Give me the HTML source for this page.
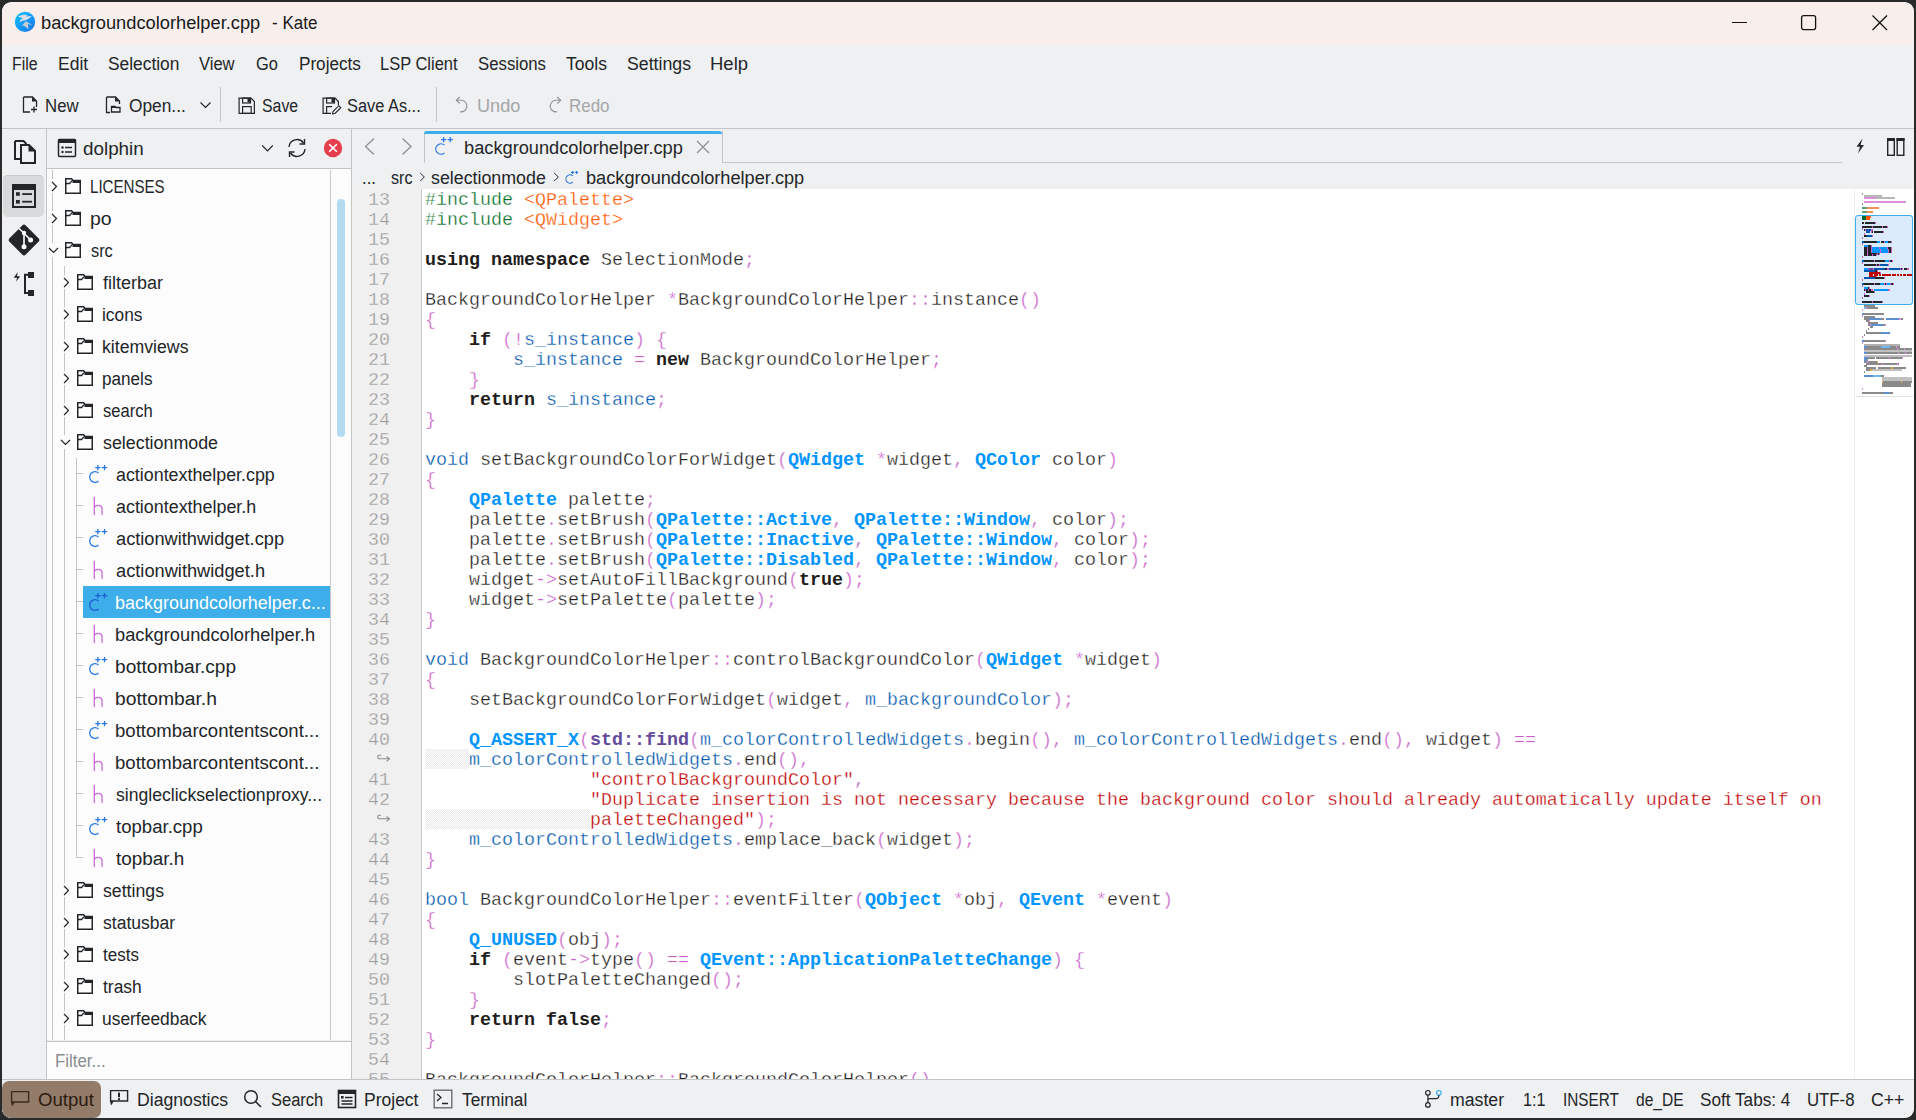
<!DOCTYPE html>
<html><head><meta charset="utf-8"><style>
html,body{margin:0;padding:0}
body{width:1916px;height:1120px;overflow:hidden;background:#2a2a2a;position:relative;font-family:"Liberation Sans", sans-serif}
.t{position:absolute;white-space:pre;line-height:1;transform-origin:0 0;font-family:"Liberation Sans", sans-serif}
.c{position:absolute;left:425px;white-space:pre;font-family:"Liberation Mono", monospace;font-size:18.3333px;line-height:20px;color:#1f1c1b;-webkit-text-stroke:0.3px #fff}
.c b{-webkit-text-stroke:0}
.ln{position:absolute;left:353px;width:37px;text-align:right;white-space:pre;font-family:"Liberation Mono", monospace;font-size:18.3333px;line-height:20px;color:#9a9a9a;-webkit-text-stroke:0.3px #f0f0f0}
svg{overflow:visible}
</style></head><body>
<div style="position:absolute;left:0;top:0;width:1916px;height:1120px;clip-path:inset(2px round 9px)">
<div style="position:absolute;left:2px;top:2px;width:1912px;height:1116px;border-radius:9px;overflow:hidden;background:#eff0f1"></div><div style="position:absolute;left:2px;top:2px;width:1912px;height:43px;border-radius:9px 9px 0 0;background:#f8efec"></div><svg style="position:absolute;left:14px;top:11px" width="22" height="22" viewBox="0 0 22 22"><defs><linearGradient id="kg" x1="0" y1="0" x2="1" y2="1"><stop offset="0" stop-color="#10c8ff"/><stop offset="1" stop-color="#1a70f0"/></linearGradient></defs>
<circle cx="11" cy="10.85" r="10.2" fill="url(#kg)"/>
<path d="M4 5.5 C7 4 10 3.6 13.5 3.9 L11.8 5.6 C14 5.4 16 5 17.6 4.9 C15.5 7.5 13 9 10 9.6 C8 10 6.5 10.5 5.8 11.3 C5.3 9.5 6.8 8.2 9 7.4 C7.5 6.8 6 6.2 4 5.5 Z" fill="#dcdfe3"/>
<path d="M7.8 14.3 C9.5 13.2 10.8 11.5 11.3 10.2 C13.5 11 16.5 12.6 18.3 14.4 C16.8 14.3 15.2 13.5 13.8 12.6 C14 14.5 14.3 16.5 14.4 18.6 C12.8 16.5 10.5 14.8 7.8 14.3 Z" fill="#c9ccd1"/></svg><svg style="position:absolute;left:1730px;top:14px" width="20" height="18" viewBox="0 0 20 18"><path d="M2 8.5 H17" stroke="#111" stroke-width="1.2"/></svg><svg style="position:absolute;left:1799px;top:13px" width="20" height="20" viewBox="0 0 20 20"><rect x="2.6" y="2.6" width="14" height="14" rx="2" fill="none" stroke="#111" stroke-width="1.3"/></svg><svg style="position:absolute;left:1870px;top:13px" width="20" height="20" viewBox="0 0 20 20"><path d="M2.5 2.5 L17 17 M17 2.5 L2.5 17" stroke="#111" stroke-width="1.3"/></svg><svg style="position:absolute;left:22px;top:96px" width="17" height="18" viewBox="0 0 17 18"><path d="M1.5 1 H10.5 L14.5 5 V11 M14.5 11 M8 16 H1.5 V1" fill="none" stroke="#232629" stroke-width="1.3"/><path d="M10 1 L14.5 5.5 H10 Z" fill="#232629"/><path d="M12 10.5 V16.5 M9 13.5 H15" stroke="#232629" stroke-width="1.3"/></svg><svg style="position:absolute;left:105px;top:96px" width="17" height="18" viewBox="0 0 17 18"><path d="M1.5 1 H10.5 L14.5 5 V8 M5 16.5 H1.5 V1" fill="none" stroke="#232629" stroke-width="1.3"/><path d="M10 1 L14.5 5.5 H10 Z" fill="#232629"/><path d="M6.5 10.5 H10 L11 11.5 H15 V16 H6.5 Z" fill="none" stroke="#232629" stroke-width="1.3"/><rect x="6.5" y="10" width="4" height="2" fill="#232629"/></svg><svg style="position:absolute;left:199px;top:101px" width="14" height="9" viewBox="0 0 14 9"><path d="M1.5 1.5 L6.5 6.5 L11.5 1.5" fill="none" stroke="#232629" stroke-width="1.2"/></svg><div style="position:absolute;left:220px;top:87px;width:1px;height:35px;background:#c3c4c5;"></div><svg style="position:absolute;left:237.5px;top:96.5px" width="19" height="18" viewBox="0 0 19 18"><path d="M1.1 1.1 H13 L16.4 4.5 V16.4 H1.1 Z" fill="none" stroke="#232629" stroke-width="1.2"/><rect x="4.6" y="1.1" width="7.9" height="4.9" fill="none" stroke="#232629" stroke-width="1.2"/><rect x="9.5" y="1.5" width="2.6" height="4" fill="#232629"/><rect x="4.6" y="9.6" width="8.6" height="6.8" fill="none" stroke="#232629" stroke-width="1.2"/></svg><svg style="position:absolute;left:321.5px;top:96.5px" width="20" height="18" viewBox="0 0 20 18"><path d="M9 16.4 H1.1 V1.1 H13 L16.4 4.5 V8" fill="none" stroke="#232629" stroke-width="1.2"/><rect x="4.6" y="1.1" width="7.9" height="4.9" fill="none" stroke="#232629" stroke-width="1.2"/><rect x="9.5" y="1.5" width="2.6" height="4" fill="#232629"/><path d="M4.6 16.4 V9.6 H10" fill="none" stroke="#232629" stroke-width="1.2"/><path d="M10.5 16.8 L11 14.5 L16.8 8.7 L18.8 10.7 L13 16.5 Z" fill="none" stroke="#232629" stroke-width="1.1"/></svg><div style="position:absolute;left:436px;top:87px;width:1px;height:35px;background:#c3c4c5;"></div><svg style="position:absolute;left:454px;top:96px" width="16" height="18" viewBox="0 0 16 18"><path d="M2.5 4.3 H8 A5.8 5.8 0 0 1 6 15.8" fill="none" stroke="#8e9093" stroke-width="1.1"/><path d="M5.8 1 L2.3 4.3 L5.8 7.6" fill="none" stroke="#8e9093" stroke-width="1.1"/></svg><svg style="position:absolute;left:546.5px;top:96px" width="16" height="18" viewBox="0 0 16 18"><path d="M13.5 4.3 H8 A5.8 5.8 0 0 0 10 15.8" fill="none" stroke="#8e9093" stroke-width="1.1"/><path d="M10.2 1 L13.7 4.3 L10.2 7.6" fill="none" stroke="#8e9093" stroke-width="1.1"/></svg><div style="position:absolute;left:2px;top:128px;width:1912px;height:1px;background:#c3c4c5;"></div><div style="position:absolute;left:46px;top:129px;width:1px;height:950px;background:#c3c4c5;"></div><div style="position:absolute;left:3px;top:175px;width:41px;height:42px;border-radius:5px;background:#d9dadc;box-shadow:inset 0 1px 0 #c9cacc"></div><svg style="position:absolute;left:12px;top:138px" width="26" height="28" viewBox="0 0 26 28"><path d="M3 3 H11.5 L14.5 6 M8 21 H3 V3" fill="none" stroke="#232629" stroke-width="2"/><path d="M9 7 H17 L23 13 V25 H9 Z" fill="#eff0f1" stroke="#232629" stroke-width="2"/><path d="M16.5 6 L24 13.5 H16.5 Z" fill="#232629"/></svg><svg style="position:absolute;left:12px;top:184px" width="24" height="24" viewBox="0 0 24 24"><rect x="1" y="1" width="22" height="22" fill="none" stroke="#232629" stroke-width="2"/><rect x="0" y="0" width="24" height="6" fill="#232629"/><rect x="4" y="8.2" width="3.8" height="3.6" fill="#232629"/><rect x="4" y="16" width="3.8" height="3.6" fill="#232629"/><rect x="10.2" y="9.2" width="9.8" height="1.8" fill="#232629"/><rect x="10.2" y="16.8" width="9.8" height="1.8" fill="#232629"/></svg><svg style="position:absolute;left:7px;top:223px" width="34" height="34" viewBox="0 0 34 34"><rect x="5.5" y="5.5" width="23" height="23" rx="2.5" transform="rotate(45 17 17)" fill="#232629"/><path d="M12 5.5 L17 10 V24 M17 10.2 L23.6 17" fill="none" stroke="#fff" stroke-width="1.6"/><circle cx="17" cy="10" r="2.2" fill="#fff"/><circle cx="17" cy="23.8" r="2.5" fill="#fff"/><circle cx="23.6" cy="17" r="2.5" fill="#fff"/></svg><svg style="position:absolute;left:13px;top:271px" width="24" height="26" viewBox="0 0 24 26"><path d="M4.7 0.9 L0.8 6.8 H4.1 L3.1 10.8 L7.1 5.2 H4 Z" fill="#232629"/><path d="M15 3.8 H12 V22 H15" fill="none" stroke="#232629" stroke-width="2"/><rect x="15" y="1" width="6" height="6" fill="#232629"/><rect x="15" y="19" width="6" height="6" fill="#232629"/></svg><div style="position:absolute;left:47px;top:168px;width:304px;height:1px;background:#c3c4c5;"></div><div style="position:absolute;left:47px;top:169px;width:304px;height:871px;background:#fcfcfc;"></div><div style="position:absolute;left:330px;top:170px;width:1px;height:870px;background:#c9cacb;"></div><div style="position:absolute;left:337px;top:199px;width:8px;height:238px;border-radius:4px;background:#b3daf0"></div><div style="position:absolute;left:351px;top:129px;width:1px;height:950px;background:#c3c4c5;"></div><svg style="position:absolute;left:57px;top:138px" width="20" height="20" viewBox="0 0 20 20"><rect x="1.5" y="1.5" width="17" height="17" rx="1" fill="none" stroke="#232629" stroke-width="1.5"/><rect x="1" y="1" width="18" height="4" fill="#232629"/><circle cx="5.5" cy="9.5" r="1.2" fill="#232629"/><circle cx="5.5" cy="14" r="1.2" fill="#232629"/><path d="M8 9.5 H15 M8 14 H15" stroke="#232629" stroke-width="1.3"/></svg><svg style="position:absolute;left:261px;top:144px" width="13" height="9" viewBox="0 0 13 9"><path d="M1.2 1.5 L6.5 6.8 L11.8 1.5" fill="none" stroke="#232629" stroke-width="1.2"/></svg><svg style="position:absolute;left:286px;top:138px" width="22" height="20" viewBox="0 0 22 20"><path d="M3 9 A8 8 0 0 1 17.5 5" fill="none" stroke="#232629" stroke-width="1.4"/><path d="M18.5 1 V6 H13.5" fill="none" stroke="#232629" stroke-width="1.4"/><path d="M19 11 A8 8 0 0 1 4.5 15" fill="none" stroke="#232629" stroke-width="1.4"/><path d="M3.5 19 V14 H8.5" fill="none" stroke="#232629" stroke-width="1.4"/></svg><svg style="position:absolute;left:323px;top:138px" width="20" height="20" viewBox="0 0 20 20"><circle cx="10" cy="10" r="9.2" fill="#e43f4e"/><path d="M6.2 6.2 L13.8 13.8 M13.8 6.2 L6.2 13.8" stroke="#fff" stroke-width="1.6"/></svg><div style="position:absolute;left:52px;top:170px;width:1px;height:9px;background:#c4c4c4;"></div><div style="position:absolute;left:52px;top:193px;width:1px;height:9px;background:#c4c4c4;"></div><div style="position:absolute;left:52px;top:202px;width:1px;height:9px;background:#c4c4c4;"></div><div style="position:absolute;left:52px;top:225px;width:1px;height:9px;background:#c4c4c4;"></div><div style="position:absolute;left:52px;top:234px;width:1px;height:9px;background:#c4c4c4;"></div><div style="position:absolute;left:52px;top:257px;width:1px;height:9px;background:#c4c4c4;"></div><div style="position:absolute;left:52px;top:266px;width:1px;height:32px;background:#c4c4c4;"></div><div style="position:absolute;left:64px;top:266px;width:1px;height:9px;background:#c4c4c4;"></div><div style="position:absolute;left:64px;top:289px;width:1px;height:9px;background:#c4c4c4;"></div><div style="position:absolute;left:52px;top:298px;width:1px;height:32px;background:#c4c4c4;"></div><div style="position:absolute;left:64px;top:298px;width:1px;height:9px;background:#c4c4c4;"></div><div style="position:absolute;left:64px;top:321px;width:1px;height:9px;background:#c4c4c4;"></div><div style="position:absolute;left:52px;top:330px;width:1px;height:32px;background:#c4c4c4;"></div><div style="position:absolute;left:64px;top:330px;width:1px;height:9px;background:#c4c4c4;"></div><div style="position:absolute;left:64px;top:353px;width:1px;height:9px;background:#c4c4c4;"></div><div style="position:absolute;left:52px;top:362px;width:1px;height:32px;background:#c4c4c4;"></div><div style="position:absolute;left:64px;top:362px;width:1px;height:9px;background:#c4c4c4;"></div><div style="position:absolute;left:64px;top:385px;width:1px;height:9px;background:#c4c4c4;"></div><div style="position:absolute;left:52px;top:394px;width:1px;height:32px;background:#c4c4c4;"></div><div style="position:absolute;left:64px;top:394px;width:1px;height:9px;background:#c4c4c4;"></div><div style="position:absolute;left:64px;top:417px;width:1px;height:9px;background:#c4c4c4;"></div><div style="position:absolute;left:52px;top:426px;width:1px;height:32px;background:#c4c4c4;"></div><div style="position:absolute;left:64px;top:426px;width:1px;height:9px;background:#c4c4c4;"></div><div style="position:absolute;left:64px;top:449px;width:1px;height:9px;background:#c4c4c4;"></div><div style="position:absolute;left:52px;top:458px;width:1px;height:32px;background:#c4c4c4;"></div><div style="position:absolute;left:64px;top:458px;width:1px;height:32px;background:#c4c4c4;"></div><div style="position:absolute;left:76px;top:458px;width:1px;height:32px;background:#c4c4c4;"></div><div style="position:absolute;left:77px;top:473px;width:6px;height:1px;background:#c4c4c4;"></div><div style="position:absolute;left:52px;top:490px;width:1px;height:32px;background:#c4c4c4;"></div><div style="position:absolute;left:64px;top:490px;width:1px;height:32px;background:#c4c4c4;"></div><div style="position:absolute;left:76px;top:490px;width:1px;height:32px;background:#c4c4c4;"></div><div style="position:absolute;left:77px;top:505px;width:6px;height:1px;background:#c4c4c4;"></div><div style="position:absolute;left:52px;top:522px;width:1px;height:32px;background:#c4c4c4;"></div><div style="position:absolute;left:64px;top:522px;width:1px;height:32px;background:#c4c4c4;"></div><div style="position:absolute;left:76px;top:522px;width:1px;height:32px;background:#c4c4c4;"></div><div style="position:absolute;left:77px;top:537px;width:6px;height:1px;background:#c4c4c4;"></div><div style="position:absolute;left:52px;top:554px;width:1px;height:32px;background:#c4c4c4;"></div><div style="position:absolute;left:64px;top:554px;width:1px;height:32px;background:#c4c4c4;"></div><div style="position:absolute;left:76px;top:554px;width:1px;height:32px;background:#c4c4c4;"></div><div style="position:absolute;left:77px;top:569px;width:6px;height:1px;background:#c4c4c4;"></div><div style="position:absolute;left:52px;top:586px;width:1px;height:32px;background:#c4c4c4;"></div><div style="position:absolute;left:64px;top:586px;width:1px;height:32px;background:#c4c4c4;"></div><div style="position:absolute;left:76px;top:586px;width:1px;height:32px;background:#c4c4c4;"></div><div style="position:absolute;left:77px;top:601px;width:6px;height:1px;background:#c4c4c4;"></div><div style="position:absolute;left:52px;top:618px;width:1px;height:32px;background:#c4c4c4;"></div><div style="position:absolute;left:64px;top:618px;width:1px;height:32px;background:#c4c4c4;"></div><div style="position:absolute;left:76px;top:618px;width:1px;height:32px;background:#c4c4c4;"></div><div style="position:absolute;left:77px;top:633px;width:6px;height:1px;background:#c4c4c4;"></div><div style="position:absolute;left:52px;top:650px;width:1px;height:32px;background:#c4c4c4;"></div><div style="position:absolute;left:64px;top:650px;width:1px;height:32px;background:#c4c4c4;"></div><div style="position:absolute;left:76px;top:650px;width:1px;height:32px;background:#c4c4c4;"></div><div style="position:absolute;left:77px;top:665px;width:6px;height:1px;background:#c4c4c4;"></div><div style="position:absolute;left:52px;top:682px;width:1px;height:32px;background:#c4c4c4;"></div><div style="position:absolute;left:64px;top:682px;width:1px;height:32px;background:#c4c4c4;"></div><div style="position:absolute;left:76px;top:682px;width:1px;height:32px;background:#c4c4c4;"></div><div style="position:absolute;left:77px;top:697px;width:6px;height:1px;background:#c4c4c4;"></div><div style="position:absolute;left:52px;top:714px;width:1px;height:32px;background:#c4c4c4;"></div><div style="position:absolute;left:64px;top:714px;width:1px;height:32px;background:#c4c4c4;"></div><div style="position:absolute;left:76px;top:714px;width:1px;height:32px;background:#c4c4c4;"></div><div style="position:absolute;left:77px;top:729px;width:6px;height:1px;background:#c4c4c4;"></div><div style="position:absolute;left:52px;top:746px;width:1px;height:32px;background:#c4c4c4;"></div><div style="position:absolute;left:64px;top:746px;width:1px;height:32px;background:#c4c4c4;"></div><div style="position:absolute;left:76px;top:746px;width:1px;height:32px;background:#c4c4c4;"></div><div style="position:absolute;left:77px;top:761px;width:6px;height:1px;background:#c4c4c4;"></div><div style="position:absolute;left:52px;top:778px;width:1px;height:32px;background:#c4c4c4;"></div><div style="position:absolute;left:64px;top:778px;width:1px;height:32px;background:#c4c4c4;"></div><div style="position:absolute;left:76px;top:778px;width:1px;height:32px;background:#c4c4c4;"></div><div style="position:absolute;left:77px;top:793px;width:6px;height:1px;background:#c4c4c4;"></div><div style="position:absolute;left:52px;top:810px;width:1px;height:32px;background:#c4c4c4;"></div><div style="position:absolute;left:64px;top:810px;width:1px;height:32px;background:#c4c4c4;"></div><div style="position:absolute;left:76px;top:810px;width:1px;height:32px;background:#c4c4c4;"></div><div style="position:absolute;left:77px;top:825px;width:6px;height:1px;background:#c4c4c4;"></div><div style="position:absolute;left:52px;top:842px;width:1px;height:32px;background:#c4c4c4;"></div><div style="position:absolute;left:64px;top:842px;width:1px;height:32px;background:#c4c4c4;"></div><div style="position:absolute;left:76px;top:842px;width:1px;height:16px;background:#c4c4c4;"></div><div style="position:absolute;left:77px;top:857px;width:6px;height:1px;background:#c4c4c4;"></div><div style="position:absolute;left:52px;top:874px;width:1px;height:32px;background:#c4c4c4;"></div><div style="position:absolute;left:64px;top:874px;width:1px;height:9px;background:#c4c4c4;"></div><div style="position:absolute;left:64px;top:897px;width:1px;height:9px;background:#c4c4c4;"></div><div style="position:absolute;left:52px;top:906px;width:1px;height:32px;background:#c4c4c4;"></div><div style="position:absolute;left:64px;top:906px;width:1px;height:9px;background:#c4c4c4;"></div><div style="position:absolute;left:64px;top:929px;width:1px;height:9px;background:#c4c4c4;"></div><div style="position:absolute;left:52px;top:938px;width:1px;height:32px;background:#c4c4c4;"></div><div style="position:absolute;left:64px;top:938px;width:1px;height:9px;background:#c4c4c4;"></div><div style="position:absolute;left:64px;top:961px;width:1px;height:9px;background:#c4c4c4;"></div><div style="position:absolute;left:52px;top:970px;width:1px;height:32px;background:#c4c4c4;"></div><div style="position:absolute;left:64px;top:970px;width:1px;height:9px;background:#c4c4c4;"></div><div style="position:absolute;left:64px;top:993px;width:1px;height:9px;background:#c4c4c4;"></div><div style="position:absolute;left:52px;top:1002px;width:1px;height:32px;background:#c4c4c4;"></div><div style="position:absolute;left:64px;top:1002px;width:1px;height:9px;background:#c4c4c4;"></div><div style="position:absolute;left:64px;top:1025px;width:1px;height:9px;background:#c4c4c4;"></div><div style="position:absolute;left:52px;top:1034px;width:1px;height:6px;background:#c4c4c4;"></div><div style="position:absolute;left:64px;top:1034px;width:1px;height:6px;background:#c4c4c4;"></div><svg style="position:absolute;left:51px;top:181px" width="7" height="11" viewBox="0 0 7 11"><path d="M1 1 L5.5 5.5 L1 10" fill="none" stroke="#232629" stroke-width="1.2"/></svg><svg style="position:absolute;left:65px;top:178px" width="16" height="16" viewBox="0 0 16 16"><path d="M0.75 0.75 H6.5 L8.2 2.6 H15.25 V15.25 H0.75 Z" fill="none" stroke="#232629" stroke-width="1.5"/><rect x="7.5" y="2" width="8.5" height="3" fill="#232629"/><path d="M0.75 5.5 H4.5 L7.2 2.6" fill="none" stroke="#232629" stroke-width="1.3"/></svg><svg style="position:absolute;left:51px;top:213px" width="7" height="11" viewBox="0 0 7 11"><path d="M1 1 L5.5 5.5 L1 10" fill="none" stroke="#232629" stroke-width="1.2"/></svg><svg style="position:absolute;left:65px;top:210px" width="16" height="16" viewBox="0 0 16 16"><path d="M0.75 0.75 H6.5 L8.2 2.6 H15.25 V15.25 H0.75 Z" fill="none" stroke="#232629" stroke-width="1.5"/><rect x="7.5" y="2" width="8.5" height="3" fill="#232629"/><path d="M0.75 5.5 H4.5 L7.2 2.6" fill="none" stroke="#232629" stroke-width="1.3"/></svg><svg style="position:absolute;left:48px;top:247px" width="11" height="7" viewBox="0 0 11 7"><path d="M1 1 L5.5 5.5 L10 1" fill="none" stroke="#232629" stroke-width="1.2"/></svg><svg style="position:absolute;left:65px;top:242px" width="16" height="16" viewBox="0 0 16 16"><path d="M0.75 0.75 H6.5 L8.2 2.6 H15.25 V15.25 H0.75 Z" fill="none" stroke="#232629" stroke-width="1.5"/><rect x="7.5" y="2" width="8.5" height="3" fill="#232629"/><path d="M0.75 5.5 H4.5 L7.2 2.6" fill="none" stroke="#232629" stroke-width="1.3"/></svg><svg style="position:absolute;left:63px;top:277px" width="7" height="11" viewBox="0 0 7 11"><path d="M1 1 L5.5 5.5 L1 10" fill="none" stroke="#232629" stroke-width="1.2"/></svg><svg style="position:absolute;left:77px;top:274px" width="16" height="16" viewBox="0 0 16 16"><path d="M0.75 0.75 H6.5 L8.2 2.6 H15.25 V15.25 H0.75 Z" fill="none" stroke="#232629" stroke-width="1.5"/><rect x="7.5" y="2" width="8.5" height="3" fill="#232629"/><path d="M0.75 5.5 H4.5 L7.2 2.6" fill="none" stroke="#232629" stroke-width="1.3"/></svg><svg style="position:absolute;left:63px;top:309px" width="7" height="11" viewBox="0 0 7 11"><path d="M1 1 L5.5 5.5 L1 10" fill="none" stroke="#232629" stroke-width="1.2"/></svg><svg style="position:absolute;left:77px;top:306px" width="16" height="16" viewBox="0 0 16 16"><path d="M0.75 0.75 H6.5 L8.2 2.6 H15.25 V15.25 H0.75 Z" fill="none" stroke="#232629" stroke-width="1.5"/><rect x="7.5" y="2" width="8.5" height="3" fill="#232629"/><path d="M0.75 5.5 H4.5 L7.2 2.6" fill="none" stroke="#232629" stroke-width="1.3"/></svg><svg style="position:absolute;left:63px;top:341px" width="7" height="11" viewBox="0 0 7 11"><path d="M1 1 L5.5 5.5 L1 10" fill="none" stroke="#232629" stroke-width="1.2"/></svg><svg style="position:absolute;left:77px;top:338px" width="16" height="16" viewBox="0 0 16 16"><path d="M0.75 0.75 H6.5 L8.2 2.6 H15.25 V15.25 H0.75 Z" fill="none" stroke="#232629" stroke-width="1.5"/><rect x="7.5" y="2" width="8.5" height="3" fill="#232629"/><path d="M0.75 5.5 H4.5 L7.2 2.6" fill="none" stroke="#232629" stroke-width="1.3"/></svg><svg style="position:absolute;left:63px;top:373px" width="7" height="11" viewBox="0 0 7 11"><path d="M1 1 L5.5 5.5 L1 10" fill="none" stroke="#232629" stroke-width="1.2"/></svg><svg style="position:absolute;left:77px;top:370px" width="16" height="16" viewBox="0 0 16 16"><path d="M0.75 0.75 H6.5 L8.2 2.6 H15.25 V15.25 H0.75 Z" fill="none" stroke="#232629" stroke-width="1.5"/><rect x="7.5" y="2" width="8.5" height="3" fill="#232629"/><path d="M0.75 5.5 H4.5 L7.2 2.6" fill="none" stroke="#232629" stroke-width="1.3"/></svg><svg style="position:absolute;left:63px;top:405px" width="7" height="11" viewBox="0 0 7 11"><path d="M1 1 L5.5 5.5 L1 10" fill="none" stroke="#232629" stroke-width="1.2"/></svg><svg style="position:absolute;left:77px;top:402px" width="16" height="16" viewBox="0 0 16 16"><path d="M0.75 0.75 H6.5 L8.2 2.6 H15.25 V15.25 H0.75 Z" fill="none" stroke="#232629" stroke-width="1.5"/><rect x="7.5" y="2" width="8.5" height="3" fill="#232629"/><path d="M0.75 5.5 H4.5 L7.2 2.6" fill="none" stroke="#232629" stroke-width="1.3"/></svg><svg style="position:absolute;left:60px;top:439px" width="11" height="7" viewBox="0 0 11 7"><path d="M1 1 L5.5 5.5 L10 1" fill="none" stroke="#232629" stroke-width="1.2"/></svg><svg style="position:absolute;left:77px;top:434px" width="16" height="16" viewBox="0 0 16 16"><path d="M0.75 0.75 H6.5 L8.2 2.6 H15.25 V15.25 H0.75 Z" fill="none" stroke="#232629" stroke-width="1.5"/><rect x="7.5" y="2" width="8.5" height="3" fill="#232629"/><path d="M0.75 5.5 H4.5 L7.2 2.6" fill="none" stroke="#232629" stroke-width="1.3"/></svg><svg style="position:absolute;left:86.5px;top:463.2px" width="24" height="22" viewBox="0 0 24 22"><path d="M11.55 10.06 A5.3 5.3 0 1 0 11.55 17.94" fill="none" stroke="#2a78e6" stroke-width="1.3"/><path d="M8.20 4.6 H13.60 M10.9 1.90 V7.30 M14.80 4.6 H20.20 M17.5 1.90 V7.30" stroke="#2a78e6" stroke-width="1.3"/></svg><svg style="position:absolute;left:93px;top:497px" width="11" height="18" viewBox="0 0 11 18"><path d="M1.3 0 V18 M1.3 11 C1.8 7.6 9 7.2 9 11.5 V18" fill="none" stroke="#cc6fdc" stroke-width="1.3"/></svg><svg style="position:absolute;left:86.5px;top:527.2px" width="24" height="22" viewBox="0 0 24 22"><path d="M11.55 10.06 A5.3 5.3 0 1 0 11.55 17.94" fill="none" stroke="#2a78e6" stroke-width="1.3"/><path d="M8.20 4.6 H13.60 M10.9 1.90 V7.30 M14.80 4.6 H20.20 M17.5 1.90 V7.30" stroke="#2a78e6" stroke-width="1.3"/></svg><svg style="position:absolute;left:93px;top:561px" width="11" height="18" viewBox="0 0 11 18"><path d="M1.3 0 V18 M1.3 11 C1.8 7.6 9 7.2 9 11.5 V18" fill="none" stroke="#cc6fdc" stroke-width="1.3"/></svg><div style="position:absolute;left:83px;top:586px;width:247px;height:32px;background:#3daee9;"></div><svg style="position:absolute;left:86.5px;top:591.2px" width="24" height="22" viewBox="0 0 24 22"><path d="M11.55 10.06 A5.3 5.3 0 1 0 11.55 17.94" fill="none" stroke="#1d5fd0" stroke-width="1.3"/><path d="M8.20 4.6 H13.60 M10.9 1.90 V7.30 M14.80 4.6 H20.20 M17.5 1.90 V7.30" stroke="#1d5fd0" stroke-width="1.3"/></svg><svg style="position:absolute;left:93px;top:625px" width="11" height="18" viewBox="0 0 11 18"><path d="M1.3 0 V18 M1.3 11 C1.8 7.6 9 7.2 9 11.5 V18" fill="none" stroke="#cc6fdc" stroke-width="1.3"/></svg><svg style="position:absolute;left:86.5px;top:655.2px" width="24" height="22" viewBox="0 0 24 22"><path d="M11.55 10.06 A5.3 5.3 0 1 0 11.55 17.94" fill="none" stroke="#2a78e6" stroke-width="1.3"/><path d="M8.20 4.6 H13.60 M10.9 1.90 V7.30 M14.80 4.6 H20.20 M17.5 1.90 V7.30" stroke="#2a78e6" stroke-width="1.3"/></svg><svg style="position:absolute;left:93px;top:689px" width="11" height="18" viewBox="0 0 11 18"><path d="M1.3 0 V18 M1.3 11 C1.8 7.6 9 7.2 9 11.5 V18" fill="none" stroke="#cc6fdc" stroke-width="1.3"/></svg><svg style="position:absolute;left:86.5px;top:719.2px" width="24" height="22" viewBox="0 0 24 22"><path d="M11.55 10.06 A5.3 5.3 0 1 0 11.55 17.94" fill="none" stroke="#2a78e6" stroke-width="1.3"/><path d="M8.20 4.6 H13.60 M10.9 1.90 V7.30 M14.80 4.6 H20.20 M17.5 1.90 V7.30" stroke="#2a78e6" stroke-width="1.3"/></svg><svg style="position:absolute;left:93px;top:753px" width="11" height="18" viewBox="0 0 11 18"><path d="M1.3 0 V18 M1.3 11 C1.8 7.6 9 7.2 9 11.5 V18" fill="none" stroke="#cc6fdc" stroke-width="1.3"/></svg><svg style="position:absolute;left:93px;top:785px" width="11" height="18" viewBox="0 0 11 18"><path d="M1.3 0 V18 M1.3 11 C1.8 7.6 9 7.2 9 11.5 V18" fill="none" stroke="#cc6fdc" stroke-width="1.3"/></svg><svg style="position:absolute;left:86.5px;top:815.2px" width="24" height="22" viewBox="0 0 24 22"><path d="M11.55 10.06 A5.3 5.3 0 1 0 11.55 17.94" fill="none" stroke="#2a78e6" stroke-width="1.3"/><path d="M8.20 4.6 H13.60 M10.9 1.90 V7.30 M14.80 4.6 H20.20 M17.5 1.90 V7.30" stroke="#2a78e6" stroke-width="1.3"/></svg><svg style="position:absolute;left:93px;top:849px" width="11" height="18" viewBox="0 0 11 18"><path d="M1.3 0 V18 M1.3 11 C1.8 7.6 9 7.2 9 11.5 V18" fill="none" stroke="#cc6fdc" stroke-width="1.3"/></svg><svg style="position:absolute;left:63px;top:885px" width="7" height="11" viewBox="0 0 7 11"><path d="M1 1 L5.5 5.5 L1 10" fill="none" stroke="#232629" stroke-width="1.2"/></svg><svg style="position:absolute;left:77px;top:882px" width="16" height="16" viewBox="0 0 16 16"><path d="M0.75 0.75 H6.5 L8.2 2.6 H15.25 V15.25 H0.75 Z" fill="none" stroke="#232629" stroke-width="1.5"/><rect x="7.5" y="2" width="8.5" height="3" fill="#232629"/><path d="M0.75 5.5 H4.5 L7.2 2.6" fill="none" stroke="#232629" stroke-width="1.3"/></svg><svg style="position:absolute;left:63px;top:917px" width="7" height="11" viewBox="0 0 7 11"><path d="M1 1 L5.5 5.5 L1 10" fill="none" stroke="#232629" stroke-width="1.2"/></svg><svg style="position:absolute;left:77px;top:914px" width="16" height="16" viewBox="0 0 16 16"><path d="M0.75 0.75 H6.5 L8.2 2.6 H15.25 V15.25 H0.75 Z" fill="none" stroke="#232629" stroke-width="1.5"/><rect x="7.5" y="2" width="8.5" height="3" fill="#232629"/><path d="M0.75 5.5 H4.5 L7.2 2.6" fill="none" stroke="#232629" stroke-width="1.3"/></svg><svg style="position:absolute;left:63px;top:949px" width="7" height="11" viewBox="0 0 7 11"><path d="M1 1 L5.5 5.5 L1 10" fill="none" stroke="#232629" stroke-width="1.2"/></svg><svg style="position:absolute;left:77px;top:946px" width="16" height="16" viewBox="0 0 16 16"><path d="M0.75 0.75 H6.5 L8.2 2.6 H15.25 V15.25 H0.75 Z" fill="none" stroke="#232629" stroke-width="1.5"/><rect x="7.5" y="2" width="8.5" height="3" fill="#232629"/><path d="M0.75 5.5 H4.5 L7.2 2.6" fill="none" stroke="#232629" stroke-width="1.3"/></svg><svg style="position:absolute;left:63px;top:981px" width="7" height="11" viewBox="0 0 7 11"><path d="M1 1 L5.5 5.5 L1 10" fill="none" stroke="#232629" stroke-width="1.2"/></svg><svg style="position:absolute;left:77px;top:978px" width="16" height="16" viewBox="0 0 16 16"><path d="M0.75 0.75 H6.5 L8.2 2.6 H15.25 V15.25 H0.75 Z" fill="none" stroke="#232629" stroke-width="1.5"/><rect x="7.5" y="2" width="8.5" height="3" fill="#232629"/><path d="M0.75 5.5 H4.5 L7.2 2.6" fill="none" stroke="#232629" stroke-width="1.3"/></svg><svg style="position:absolute;left:63px;top:1013px" width="7" height="11" viewBox="0 0 7 11"><path d="M1 1 L5.5 5.5 L1 10" fill="none" stroke="#232629" stroke-width="1.2"/></svg><svg style="position:absolute;left:77px;top:1010px" width="16" height="16" viewBox="0 0 16 16"><path d="M0.75 0.75 H6.5 L8.2 2.6 H15.25 V15.25 H0.75 Z" fill="none" stroke="#232629" stroke-width="1.5"/><rect x="7.5" y="2" width="8.5" height="3" fill="#232629"/><path d="M0.75 5.5 H4.5 L7.2 2.6" fill="none" stroke="#232629" stroke-width="1.3"/></svg><div style="position:absolute;left:47px;top:1041px;width:304px;height:1px;background:#c3c4c5;"></div><div style="position:absolute;left:47px;top:1042px;width:304px;height:37px;background:#fcfcfc;"></div><div style="position:absolute;left:722px;top:162px;width:1120px;height:1px;background:#c3c4c5;"></div><div style="position:absolute;left:424px;top:131px;width:298px;height:3px;background:#3daee9;border-radius:3px 3px 0 0"></div><div style="position:absolute;left:424px;top:134px;width:1px;height:29px;background:#c3c4c5;"></div><div style="position:absolute;left:722px;top:131px;width:1px;height:31px;background:#c3c4c5;"></div><svg style="position:absolute;left:363px;top:137px" width="14" height="20" viewBox="0 0 14 20"><path d="M11 1.5 L2.5 9.5 L11 17.5" fill="none" stroke="#8d9093" stroke-width="1.3"/></svg><svg style="position:absolute;left:400px;top:137px" width="14" height="20" viewBox="0 0 14 20"><path d="M2.5 1.5 L11 9.5 L2.5 17.5" fill="none" stroke="#8d9093" stroke-width="1.3"/></svg><svg style="position:absolute;left:432.75px;top:135.4px" width="24" height="22" viewBox="0 0 24 22"><path d="M11.48 10.14 A5.2 5.2 0 1 0 11.48 17.86" fill="none" stroke="#2a78e6" stroke-width="1.3"/><path d="M8.05 4.6 H13.25 M10.65 2.00 V7.20 M14.65 4.6 H19.85 M17.25 2.00 V7.20" stroke="#2a78e6" stroke-width="1.3"/></svg><svg style="position:absolute;left:695px;top:139px" width="16" height="16" viewBox="0 0 16 16"><path d="M2 2 L14 14 M14 2 L2 14" stroke="#8d9093" stroke-width="1.3"/></svg><svg style="position:absolute;left:1853px;top:137px" width="14" height="18" viewBox="0 0 14 18"><path d="M9.5 1.5 L3.5 9.8 H7 L5 16.5 L11 8 H7.5 Z" fill="#232629"/></svg><svg style="position:absolute;left:1886px;top:137px" width="20" height="20" viewBox="0 0 20 20"><rect x="1.7" y="1.7" width="6.6" height="16.6" fill="none" stroke="#232629" stroke-width="1.4"/><rect x="11.2" y="1.7" width="6.6" height="16.6" fill="none" stroke="#232629" stroke-width="1.4"/><rect x="1" y="1" width="8" height="3" fill="#232629"/><rect x="10.5" y="1" width="8" height="3" fill="#232629"/></svg><svg style="position:absolute;left:418px;top:172px" width="8" height="12" viewBox="0 0 8 12"><path d="M2.3 1 L6.3 5 L2.3 9" fill="none" stroke="#232629" stroke-width="1"/></svg><svg style="position:absolute;left:552px;top:172px" width="8" height="12" viewBox="0 0 8 12"><path d="M2.3 1 L6.3 5 L2.3 9" fill="none" stroke="#232629" stroke-width="1"/></svg><svg style="position:absolute;left:561.9px;top:165.0px" width="24" height="22" viewBox="0 0 24 22"><path d="M10.74 10.95 A4.1 4.1 0 1 0 10.74 17.05" fill="none" stroke="#2a78e6" stroke-width="1.1"/><path d="M9.10 7.4 H12.10 M10.6 5.90 V8.90 M13.10 7.4 H16.10 M14.6 5.90 V8.90" stroke="#2a78e6" stroke-width="1.1"/></svg><div style="position:absolute;left:352px;top:189px;width:69px;height:890px;background:#f0f0f0;"></div><div style="position:absolute;left:421px;top:189px;width:1px;height:890px;background:#c8c8c8;"></div><div style="position:absolute;left:422px;top:189px;width:1432px;height:890px;background:#ffffff;"></div><div style="position:absolute;left:1854px;top:189px;width:60px;height:890px;background:#ffffff;"></div><div style="position:absolute;left:1854px;top:189px;width:1px;height:890px;background:#f0f0f0;"></div><div class="ln" style="top:191px">13</div><div class="c" style="top:191px"><span style="color:#006e28;">#include</span> <span style="color:#ff5500;">&lt;QPalette&gt;</span></div><div class="ln" style="top:211px">14</div><div class="c" style="top:211px"><span style="color:#006e28;">#include</span> <span style="color:#ff5500;">&lt;QWidget&gt;</span></div><div class="ln" style="top:231px">15</div><div class="ln" style="top:251px">16</div><div class="c" style="top:251px"><span style="font-weight:700;-webkit-text-stroke:0;">using</span> <span style="font-weight:700;-webkit-text-stroke:0;">namespace</span> SelectionMode<span style="color:#ca60ca;">;</span></div><div class="ln" style="top:271px">17</div><div class="ln" style="top:291px">18</div><div class="c" style="top:291px">BackgroundColorHelper <span style="color:#ca60ca;">*</span>BackgroundColorHelper<span style="color:#ca60ca;">::</span>instance<span style="color:#ca60ca;">()</span></div><div class="ln" style="top:311px">19</div><div class="c" style="top:311px"><span style="color:#ca60ca;">{</span></div><div class="ln" style="top:331px">20</div><div class="c" style="top:331px">    <span style="font-weight:700;-webkit-text-stroke:0;">if</span> <span style="color:#ca60ca;">(!</span><span style="color:#0057ae;">s_instance</span><span style="color:#ca60ca;">)</span> <span style="color:#ca60ca;">{</span></div><div class="ln" style="top:351px">21</div><div class="c" style="top:351px">        <span style="color:#0057ae;">s_instance</span> <span style="color:#ca60ca;">=</span> <span style="font-weight:700;-webkit-text-stroke:0;">new</span> BackgroundColorHelper<span style="color:#ca60ca;">;</span></div><div class="ln" style="top:371px">22</div><div class="c" style="top:371px">    <span style="color:#ca60ca;">}</span></div><div class="ln" style="top:391px">23</div><div class="c" style="top:391px">    <span style="font-weight:700;-webkit-text-stroke:0;">return</span> <span style="color:#0057ae;">s_instance</span><span style="color:#ca60ca;">;</span></div><div class="ln" style="top:411px">24</div><div class="c" style="top:411px"><span style="color:#ca60ca;">}</span></div><div class="ln" style="top:431px">25</div><div class="ln" style="top:451px">26</div><div class="c" style="top:451px"><span style="color:#0057ae;">void</span> setBackgroundColorForWidget<span style="color:#ca60ca;">(</span><span style="color:#0095ff;font-weight:700;-webkit-text-stroke:0;">QWidget</span> <span style="color:#ca60ca;">*</span>widget<span style="color:#ca60ca;">,</span> <span style="color:#0095ff;font-weight:700;-webkit-text-stroke:0;">QColor</span> color<span style="color:#ca60ca;">)</span></div><div class="ln" style="top:471px">27</div><div class="c" style="top:471px"><span style="color:#ca60ca;">{</span></div><div class="ln" style="top:491px">28</div><div class="c" style="top:491px">    <span style="color:#0095ff;font-weight:700;-webkit-text-stroke:0;">QPalette</span> palette<span style="color:#ca60ca;">;</span></div><div class="ln" style="top:511px">29</div><div class="c" style="top:511px">    palette<span style="color:#ca60ca;">.</span>setBrush<span style="color:#ca60ca;">(</span><span style="color:#0095ff;font-weight:700;-webkit-text-stroke:0;">QPalette::Active</span><span style="color:#ca60ca;">,</span> <span style="color:#0095ff;font-weight:700;-webkit-text-stroke:0;">QPalette::Window</span><span style="color:#ca60ca;">,</span> color<span style="color:#ca60ca;">);</span></div><div class="ln" style="top:531px">30</div><div class="c" style="top:531px">    palette<span style="color:#ca60ca;">.</span>setBrush<span style="color:#ca60ca;">(</span><span style="color:#0095ff;font-weight:700;-webkit-text-stroke:0;">QPalette::Inactive</span><span style="color:#ca60ca;">,</span> <span style="color:#0095ff;font-weight:700;-webkit-text-stroke:0;">QPalette::Window</span><span style="color:#ca60ca;">,</span> color<span style="color:#ca60ca;">);</span></div><div class="ln" style="top:551px">31</div><div class="c" style="top:551px">    palette<span style="color:#ca60ca;">.</span>setBrush<span style="color:#ca60ca;">(</span><span style="color:#0095ff;font-weight:700;-webkit-text-stroke:0;">QPalette::Disabled</span><span style="color:#ca60ca;">,</span> <span style="color:#0095ff;font-weight:700;-webkit-text-stroke:0;">QPalette::Window</span><span style="color:#ca60ca;">,</span> color<span style="color:#ca60ca;">);</span></div><div class="ln" style="top:571px">32</div><div class="c" style="top:571px">    widget<span style="color:#ca60ca;">-&gt;</span>setAutoFillBackground<span style="color:#ca60ca;">(</span><span style="font-weight:700;-webkit-text-stroke:0;">true</span><span style="color:#ca60ca;">);</span></div><div class="ln" style="top:591px">33</div><div class="c" style="top:591px">    widget<span style="color:#ca60ca;">-&gt;</span>setPalette<span style="color:#ca60ca;">(</span>palette<span style="color:#ca60ca;">);</span></div><div class="ln" style="top:611px">34</div><div class="c" style="top:611px"><span style="color:#ca60ca;">}</span></div><div class="ln" style="top:631px">35</div><div class="ln" style="top:651px">36</div><div class="c" style="top:651px"><span style="color:#0057ae;">void</span> BackgroundColorHelper<span style="color:#ca60ca;">::</span>controlBackgroundColor<span style="color:#ca60ca;">(</span><span style="color:#0095ff;font-weight:700;-webkit-text-stroke:0;">QWidget</span> <span style="color:#ca60ca;">*</span>widget<span style="color:#ca60ca;">)</span></div><div class="ln" style="top:671px">37</div><div class="c" style="top:671px"><span style="color:#ca60ca;">{</span></div><div class="ln" style="top:691px">38</div><div class="c" style="top:691px">    setBackgroundColorForWidget<span style="color:#ca60ca;">(</span>widget<span style="color:#ca60ca;">,</span> <span style="color:#0057ae;">m_backgroundColor</span><span style="color:#ca60ca;">);</span></div><div class="ln" style="top:711px">39</div><div class="ln" style="top:731px">40</div><div class="c" style="top:731px">    <span style="color:#0095ff;font-weight:700;-webkit-text-stroke:0;">Q_ASSERT_X</span><span style="color:#ca60ca;">(</span><span style="color:#644a9b;font-weight:700;-webkit-text-stroke:0;">std::find</span><span style="color:#ca60ca;">(</span><span style="color:#0057ae;">m_colorControlledWidgets</span><span style="color:#ca60ca;">.</span>begin<span style="color:#ca60ca;">(),</span> <span style="color:#0057ae;">m_colorControlledWidgets</span><span style="color:#ca60ca;">.</span>end<span style="color:#ca60ca;">(),</span> widget<span style="color:#ca60ca;">)</span> <span style="color:#ca60ca;">==</span></div><div style="position:absolute;left:425px;top:749px;width:44px;height:20px;background:repeating-conic-gradient(#e7e7e7 0 25%, #ffffff 0 50%) 0 0/2px 2px"></div><svg style="position:absolute;left:377px;top:754px" width="14" height="9" viewBox="0 0 14 9"><path d="M4 1.2 H2.5 A1.8 1.8 0 0 0 2.5 4.8 H12 M9.5 2.3 L12.5 4.8 L9.5 7.3" fill="none" stroke="#8a8a8a" stroke-width="1.1"/></svg><div class="c" style="top:751px">    <span style="color:#0057ae;">m_colorControlledWidgets</span><span style="color:#ca60ca;">.</span>end<span style="color:#ca60ca;">(),</span></div><div class="ln" style="top:771px">41</div><div class="c" style="top:771px">               <span style="color:#bf0303;">"controlBackgroundColor"</span><span style="color:#ca60ca;">,</span></div><div class="ln" style="top:791px">42</div><div class="c" style="top:791px">               <span style="color:#bf0303;">"Duplicate insertion is not necessary because the background color should already automatically update itself on</span></div><div style="position:absolute;left:425px;top:809px;width:165px;height:20px;background:repeating-conic-gradient(#e7e7e7 0 25%, #ffffff 0 50%) 0 0/2px 2px"></div><svg style="position:absolute;left:377px;top:814px" width="14" height="9" viewBox="0 0 14 9"><path d="M4 1.2 H2.5 A1.8 1.8 0 0 0 2.5 4.8 H12 M9.5 2.3 L12.5 4.8 L9.5 7.3" fill="none" stroke="#8a8a8a" stroke-width="1.1"/></svg><div class="c" style="top:811px">               <span style="color:#bf0303;">paletteChanged"</span><span style="color:#ca60ca;">);</span></div><div class="ln" style="top:831px">43</div><div class="c" style="top:831px">    <span style="color:#0057ae;">m_colorControlledWidgets</span><span style="color:#ca60ca;">.</span>emplace_back<span style="color:#ca60ca;">(</span>widget<span style="color:#ca60ca;">);</span></div><div class="ln" style="top:851px">44</div><div class="c" style="top:851px"><span style="color:#ca60ca;">}</span></div><div class="ln" style="top:871px">45</div><div class="ln" style="top:891px">46</div><div class="c" style="top:891px"><span style="color:#0057ae;">bool</span> BackgroundColorHelper<span style="color:#ca60ca;">::</span>eventFilter<span style="color:#ca60ca;">(</span><span style="color:#0095ff;font-weight:700;-webkit-text-stroke:0;">QObject</span> <span style="color:#ca60ca;">*</span>obj<span style="color:#ca60ca;">,</span> <span style="color:#0095ff;font-weight:700;-webkit-text-stroke:0;">QEvent</span> <span style="color:#ca60ca;">*</span>event<span style="color:#ca60ca;">)</span></div><div class="ln" style="top:911px">47</div><div class="c" style="top:911px"><span style="color:#ca60ca;">{</span></div><div class="ln" style="top:931px">48</div><div class="c" style="top:931px">    <span style="color:#0095ff;font-weight:700;-webkit-text-stroke:0;">Q_UNUSED</span><span style="color:#ca60ca;">(</span>obj<span style="color:#ca60ca;">);</span></div><div class="ln" style="top:951px">49</div><div class="c" style="top:951px">    <span style="font-weight:700;-webkit-text-stroke:0;">if</span> <span style="color:#ca60ca;">(</span>event<span style="color:#ca60ca;">-&gt;</span>type<span style="color:#ca60ca;">()</span> <span style="color:#ca60ca;">==</span> <span style="color:#0095ff;font-weight:700;-webkit-text-stroke:0;">QEvent::ApplicationPaletteChange</span><span style="color:#ca60ca;">)</span> <span style="color:#ca60ca;">{</span></div><div class="ln" style="top:971px">50</div><div class="c" style="top:971px">        slotPaletteChanged<span style="color:#ca60ca;">();</span></div><div class="ln" style="top:991px">51</div><div class="c" style="top:991px">    <span style="color:#ca60ca;">}</span></div><div class="ln" style="top:1011px">52</div><div class="c" style="top:1011px">    <span style="font-weight:700;-webkit-text-stroke:0;">return</span> <span style="font-weight:700;-webkit-text-stroke:0;">false</span><span style="color:#ca60ca;">;</span></div><div class="ln" style="top:1031px">53</div><div class="c" style="top:1031px"><span style="color:#ca60ca;">}</span></div><div class="ln" style="top:1051px">54</div><div class="ln" style="top:1071px">55</div><div class="c" style="top:1071px">BackgroundColorHelper<span style="color:#ca60ca;">::</span>BackgroundColorHelper<span style="color:#ca60ca;">()</span></div><div style="position:absolute;left:1855px;top:215px;width:56px;height:88px;border:1px solid #3daee9;border-radius:3px;background:#daeaf8"></div><div style="position:absolute;left:1862px;top:193px;width:1px;height:2px;background:#999;"></div><div style="position:absolute;left:1864px;top:195px;width:18px;height:2px;background:#b8b8b8;"></div><div style="position:absolute;left:1864px;top:197px;width:12px;height:2px;background:#dc8fdc;"></div><div style="position:absolute;left:1876px;top:197px;width:19px;height:2px;background:#b8b8b8;"></div><div style="position:absolute;left:1864px;top:201px;width:42px;height:2px;background:#dc8fdc;"></div><div style="position:absolute;left:1862px;top:203px;width:1px;height:2px;background:#999;"></div><div style="position:absolute;left:1862px;top:207px;width:5px;height:2px;background:#5aa070;"></div><div style="position:absolute;left:1867px;top:207px;width:12px;height:2px;background:#f0905a;"></div><div style="position:absolute;left:1862px;top:211px;width:5px;height:2px;background:#5aa070;"></div><div style="position:absolute;left:1867px;top:211px;width:6px;height:2px;background:#f0905a;"></div><div style="position:absolute;left:1862.0px;top:216px;width:3.68px;height:2px;background:#006e28;"></div><div style="position:absolute;left:1866.14px;top:216px;width:4.6px;height:2px;background:#ff5500;"></div><div style="position:absolute;left:1862.0px;top:218px;width:3.68px;height:2px;background:#006e28;"></div><div style="position:absolute;left:1866.14px;top:218px;width:4.14px;height:2px;background:#ff5500;"></div><div style="position:absolute;left:1862.0px;top:222px;width:2.3px;height:2px;background:#232629;"></div><div style="position:absolute;left:1864.76px;top:222px;width:4.14px;height:2px;background:#232629;"></div><div style="position:absolute;left:1869.36px;top:222px;width:5.98px;height:2px;background:#232629;"></div><div style="position:absolute;left:1875.34px;top:222px;width:0.46px;height:2px;background:#ca60ca;"></div><div style="position:absolute;left:1862.0px;top:226px;width:9.66px;height:2px;background:#232629;"></div><div style="position:absolute;left:1872.12px;top:226px;width:0.46px;height:2px;background:#ca60ca;"></div><div style="position:absolute;left:1872.58px;top:226px;width:9.66px;height:2px;background:#232629;"></div><div style="position:absolute;left:1882.24px;top:226px;width:0.92px;height:2px;background:#ca60ca;"></div><div style="position:absolute;left:1883.16px;top:226px;width:3.68px;height:2px;background:#232629;"></div><div style="position:absolute;left:1886.84px;top:226px;width:0.92px;height:2px;background:#ca60ca;"></div><div style="position:absolute;left:1862.0px;top:228px;width:0.46px;height:2px;background:#ca60ca;"></div><div style="position:absolute;left:1863.84px;top:229px;width:0.92px;height:2px;background:#232629;"></div><div style="position:absolute;left:1865.22px;top:229px;width:0.92px;height:2px;background:#ca60ca;"></div><div style="position:absolute;left:1866.14px;top:229px;width:4.6px;height:2px;background:#0057ae;"></div><div style="position:absolute;left:1870.74px;top:229px;width:0.46px;height:2px;background:#ca60ca;"></div><div style="position:absolute;left:1871.66px;top:229px;width:0.46px;height:2px;background:#ca60ca;"></div><div style="position:absolute;left:1865.68px;top:231px;width:4.6px;height:2px;background:#0057ae;"></div><div style="position:absolute;left:1870.74px;top:231px;width:0.46px;height:2px;background:#ca60ca;"></div><div style="position:absolute;left:1871.66px;top:231px;width:1.38px;height:2px;background:#232629;"></div><div style="position:absolute;left:1873.5px;top:231px;width:9.66px;height:2px;background:#232629;"></div><div style="position:absolute;left:1883.16px;top:231px;width:0.46px;height:2px;background:#ca60ca;"></div><div style="position:absolute;left:1863.84px;top:233px;width:0.46px;height:2px;background:#ca60ca;"></div><div style="position:absolute;left:1863.84px;top:235px;width:2.76px;height:2px;background:#232629;"></div><div style="position:absolute;left:1867.06px;top:235px;width:4.6px;height:2px;background:#0057ae;"></div><div style="position:absolute;left:1871.66px;top:235px;width:0.46px;height:2px;background:#ca60ca;"></div><div style="position:absolute;left:1862.0px;top:237px;width:0.46px;height:2px;background:#ca60ca;"></div><div style="position:absolute;left:1862.0px;top:241px;width:1.84px;height:2px;background:#0057ae;"></div><div style="position:absolute;left:1864.3px;top:241px;width:12.42px;height:2px;background:#232629;"></div><div style="position:absolute;left:1876.72px;top:241px;width:0.46px;height:2px;background:#ca60ca;"></div><div style="position:absolute;left:1877.18px;top:241px;width:3.22px;height:2px;background:#0095ff;"></div><div style="position:absolute;left:1880.86px;top:241px;width:0.46px;height:2px;background:#ca60ca;"></div><div style="position:absolute;left:1881.32px;top:241px;width:2.76px;height:2px;background:#232629;"></div><div style="position:absolute;left:1884.08px;top:241px;width:0.46px;height:2px;background:#ca60ca;"></div><div style="position:absolute;left:1885.0px;top:241px;width:2.76px;height:2px;background:#0095ff;"></div><div style="position:absolute;left:1888.22px;top:241px;width:2.3px;height:2px;background:#232629;"></div><div style="position:absolute;left:1890.52px;top:241px;width:0.46px;height:2px;background:#ca60ca;"></div><div style="position:absolute;left:1862.0px;top:243px;width:0.46px;height:2px;background:#ca60ca;"></div><div style="position:absolute;left:1863.84px;top:245px;width:3.68px;height:2px;background:#0095ff;"></div><div style="position:absolute;left:1867.98px;top:245px;width:3.22px;height:2px;background:#232629;"></div><div style="position:absolute;left:1871.2px;top:245px;width:0.46px;height:2px;background:#ca60ca;"></div><div style="position:absolute;left:1863.84px;top:247px;width:3.22px;height:2px;background:#232629;"></div><div style="position:absolute;left:1867.06px;top:247px;width:0.46px;height:2px;background:#ca60ca;"></div><div style="position:absolute;left:1867.52px;top:247px;width:3.68px;height:2px;background:#232629;"></div><div style="position:absolute;left:1871.2px;top:247px;width:0.46px;height:2px;background:#ca60ca;"></div><div style="position:absolute;left:1871.66px;top:247px;width:7.36px;height:2px;background:#0095ff;"></div><div style="position:absolute;left:1879.02px;top:247px;width:0.46px;height:2px;background:#ca60ca;"></div><div style="position:absolute;left:1879.94px;top:247px;width:7.36px;height:2px;background:#0095ff;"></div><div style="position:absolute;left:1887.3px;top:247px;width:0.46px;height:2px;background:#ca60ca;"></div><div style="position:absolute;left:1888.22px;top:247px;width:2.3px;height:2px;background:#232629;"></div><div style="position:absolute;left:1890.52px;top:247px;width:0.92px;height:2px;background:#ca60ca;"></div><div style="position:absolute;left:1863.84px;top:249px;width:3.22px;height:2px;background:#232629;"></div><div style="position:absolute;left:1867.06px;top:249px;width:0.46px;height:2px;background:#ca60ca;"></div><div style="position:absolute;left:1867.52px;top:249px;width:3.68px;height:2px;background:#232629;"></div><div style="position:absolute;left:1871.2px;top:249px;width:0.46px;height:2px;background:#ca60ca;"></div><div style="position:absolute;left:1871.66px;top:249px;width:8.28px;height:2px;background:#0095ff;"></div><div style="position:absolute;left:1879.94px;top:249px;width:0.46px;height:2px;background:#ca60ca;"></div><div style="position:absolute;left:1880.86px;top:249px;width:7.36px;height:2px;background:#0095ff;"></div><div style="position:absolute;left:1888.22px;top:249px;width:0.46px;height:2px;background:#ca60ca;"></div><div style="position:absolute;left:1889.14px;top:249px;width:2.3px;height:2px;background:#232629;"></div><div style="position:absolute;left:1891.44px;top:249px;width:0.92px;height:2px;background:#ca60ca;"></div><div style="position:absolute;left:1863.84px;top:251px;width:3.22px;height:2px;background:#232629;"></div><div style="position:absolute;left:1867.06px;top:251px;width:0.46px;height:2px;background:#ca60ca;"></div><div style="position:absolute;left:1867.52px;top:251px;width:3.68px;height:2px;background:#232629;"></div><div style="position:absolute;left:1871.2px;top:251px;width:0.46px;height:2px;background:#ca60ca;"></div><div style="position:absolute;left:1871.66px;top:251px;width:8.28px;height:2px;background:#0095ff;"></div><div style="position:absolute;left:1879.94px;top:251px;width:0.46px;height:2px;background:#ca60ca;"></div><div style="position:absolute;left:1880.86px;top:251px;width:7.36px;height:2px;background:#0095ff;"></div><div style="position:absolute;left:1888.22px;top:251px;width:0.46px;height:2px;background:#ca60ca;"></div><div style="position:absolute;left:1889.14px;top:251px;width:2.3px;height:2px;background:#232629;"></div><div style="position:absolute;left:1891.44px;top:251px;width:0.92px;height:2px;background:#ca60ca;"></div><div style="position:absolute;left:1863.84px;top:253px;width:2.76px;height:2px;background:#232629;"></div><div style="position:absolute;left:1866.6px;top:253px;width:0.92px;height:2px;background:#ca60ca;"></div><div style="position:absolute;left:1867.52px;top:253px;width:9.66px;height:2px;background:#232629;"></div><div style="position:absolute;left:1877.18px;top:253px;width:0.46px;height:2px;background:#ca60ca;"></div><div style="position:absolute;left:1877.64px;top:253px;width:1.84px;height:2px;background:#232629;"></div><div style="position:absolute;left:1879.48px;top:253px;width:0.92px;height:2px;background:#ca60ca;"></div><div style="position:absolute;left:1863.84px;top:254px;width:2.76px;height:2px;background:#232629;"></div><div style="position:absolute;left:1866.6px;top:254px;width:0.92px;height:2px;background:#ca60ca;"></div><div style="position:absolute;left:1867.52px;top:254px;width:4.6px;height:2px;background:#232629;"></div><div style="position:absolute;left:1872.12px;top:254px;width:0.46px;height:2px;background:#ca60ca;"></div><div style="position:absolute;left:1872.58px;top:254px;width:3.22px;height:2px;background:#232629;"></div><div style="position:absolute;left:1875.8px;top:254px;width:0.92px;height:2px;background:#ca60ca;"></div><div style="position:absolute;left:1862.0px;top:256px;width:0.46px;height:2px;background:#ca60ca;"></div><div style="position:absolute;left:1862.0px;top:260px;width:1.84px;height:2px;background:#0057ae;"></div><div style="position:absolute;left:1864.3px;top:260px;width:9.66px;height:2px;background:#232629;"></div><div style="position:absolute;left:1873.96px;top:260px;width:0.92px;height:2px;background:#ca60ca;"></div><div style="position:absolute;left:1874.88px;top:260px;width:10.12px;height:2px;background:#232629;"></div><div style="position:absolute;left:1885.0px;top:260px;width:0.46px;height:2px;background:#ca60ca;"></div><div style="position:absolute;left:1885.46px;top:260px;width:3.22px;height:2px;background:#0095ff;"></div><div style="position:absolute;left:1889.14px;top:260px;width:0.46px;height:2px;background:#ca60ca;"></div><div style="position:absolute;left:1889.6px;top:260px;width:2.76px;height:2px;background:#232629;"></div><div style="position:absolute;left:1892.36px;top:260px;width:0.46px;height:2px;background:#ca60ca;"></div><div style="position:absolute;left:1862.0px;top:262px;width:0.46px;height:2px;background:#ca60ca;"></div><div style="position:absolute;left:1863.84px;top:264px;width:12.42px;height:2px;background:#232629;"></div><div style="position:absolute;left:1876.26px;top:264px;width:0.46px;height:2px;background:#ca60ca;"></div><div style="position:absolute;left:1876.72px;top:264px;width:2.76px;height:2px;background:#232629;"></div><div style="position:absolute;left:1879.48px;top:264px;width:0.46px;height:2px;background:#ca60ca;"></div><div style="position:absolute;left:1880.4px;top:264px;width:7.82px;height:2px;background:#0057ae;"></div><div style="position:absolute;left:1888.22px;top:264px;width:0.92px;height:2px;background:#ca60ca;"></div><div style="position:absolute;left:1863.84px;top:268px;width:4.6px;height:2px;background:#0095ff;"></div><div style="position:absolute;left:1868.44px;top:268px;width:0.46px;height:2px;background:#ca60ca;"></div><div style="position:absolute;left:1868.9px;top:268px;width:4.14px;height:2px;background:#644a9b;"></div><div style="position:absolute;left:1873.04px;top:268px;width:0.46px;height:2px;background:#ca60ca;"></div><div style="position:absolute;left:1873.5px;top:268px;width:11.04px;height:2px;background:#0057ae;"></div><div style="position:absolute;left:1884.54px;top:268px;width:0.46px;height:2px;background:#ca60ca;"></div><div style="position:absolute;left:1885.0px;top:268px;width:2.3px;height:2px;background:#232629;"></div><div style="position:absolute;left:1887.3px;top:268px;width:1.38px;height:2px;background:#ca60ca;"></div><div style="position:absolute;left:1889.14px;top:268px;width:11.04px;height:2px;background:#0057ae;"></div><div style="position:absolute;left:1900.18px;top:268px;width:0.46px;height:2px;background:#ca60ca;"></div><div style="position:absolute;left:1900.64px;top:268px;width:1.38px;height:2px;background:#232629;"></div><div style="position:absolute;left:1902.02px;top:268px;width:1.38px;height:2px;background:#ca60ca;"></div><div style="position:absolute;left:1903.86px;top:268px;width:2.76px;height:2px;background:#232629;"></div><div style="position:absolute;left:1906.62px;top:268px;width:0.46px;height:2px;background:#ca60ca;"></div><div style="position:absolute;left:1907.54px;top:268px;width:0.92px;height:2px;background:#ca60ca;"></div><div style="position:absolute;left:1863.84px;top:270px;width:11.04px;height:2px;background:#0057ae;"></div><div style="position:absolute;left:1874.88px;top:270px;width:0.46px;height:2px;background:#ca60ca;"></div><div style="position:absolute;left:1875.34px;top:270px;width:1.38px;height:2px;background:#232629;"></div><div style="position:absolute;left:1876.72px;top:270px;width:1.38px;height:2px;background:#ca60ca;"></div><div style="position:absolute;left:1868.9px;top:272px;width:11.04px;height:2px;background:#bf0303;"></div><div style="position:absolute;left:1879.94px;top:272px;width:0.46px;height:2px;background:#ca60ca;"></div><div style="position:absolute;left:1868.9px;top:274px;width:4.6px;height:2px;background:#bf0303;"></div><div style="position:absolute;left:1873.96px;top:274px;width:4.14px;height:2px;background:#bf0303;"></div><div style="position:absolute;left:1878.56px;top:274px;width:0.92px;height:2px;background:#bf0303;"></div><div style="position:absolute;left:1879.94px;top:274px;width:1.38px;height:2px;background:#bf0303;"></div><div style="position:absolute;left:1881.78px;top:274px;width:4.14px;height:2px;background:#bf0303;"></div><div style="position:absolute;left:1886.38px;top:274px;width:3.22px;height:2px;background:#bf0303;"></div><div style="position:absolute;left:1890.06px;top:274px;width:1.38px;height:2px;background:#bf0303;"></div><div style="position:absolute;left:1891.9px;top:274px;width:4.6px;height:2px;background:#bf0303;"></div><div style="position:absolute;left:1896.96px;top:274px;width:2.3px;height:2px;background:#bf0303;"></div><div style="position:absolute;left:1899.72px;top:274px;width:2.76px;height:2px;background:#bf0303;"></div><div style="position:absolute;left:1902.94px;top:274px;width:3.22px;height:2px;background:#bf0303;"></div><div style="position:absolute;left:1906.62px;top:274px;width:5.38px;height:2px;background:#bf0303;"></div><div style="position:absolute;left:1868.9px;top:276px;width:6.9px;height:2px;background:#bf0303;"></div><div style="position:absolute;left:1875.8px;top:276px;width:0.92px;height:2px;background:#ca60ca;"></div><div style="position:absolute;left:1863.84px;top:277px;width:11.04px;height:2px;background:#0057ae;"></div><div style="position:absolute;left:1874.88px;top:277px;width:0.46px;height:2px;background:#ca60ca;"></div><div style="position:absolute;left:1875.34px;top:277px;width:5.52px;height:2px;background:#232629;"></div><div style="position:absolute;left:1880.86px;top:277px;width:0.46px;height:2px;background:#ca60ca;"></div><div style="position:absolute;left:1881.32px;top:277px;width:2.76px;height:2px;background:#232629;"></div><div style="position:absolute;left:1884.08px;top:277px;width:0.92px;height:2px;background:#ca60ca;"></div><div style="position:absolute;left:1862.0px;top:279px;width:0.46px;height:2px;background:#ca60ca;"></div><div style="position:absolute;left:1862.0px;top:283px;width:1.84px;height:2px;background:#0057ae;"></div><div style="position:absolute;left:1864.3px;top:283px;width:9.66px;height:2px;background:#232629;"></div><div style="position:absolute;left:1873.96px;top:283px;width:0.92px;height:2px;background:#ca60ca;"></div><div style="position:absolute;left:1874.88px;top:283px;width:5.06px;height:2px;background:#232629;"></div><div style="position:absolute;left:1879.94px;top:283px;width:0.46px;height:2px;background:#ca60ca;"></div><div style="position:absolute;left:1880.4px;top:283px;width:3.22px;height:2px;background:#0095ff;"></div><div style="position:absolute;left:1884.08px;top:283px;width:0.46px;height:2px;background:#ca60ca;"></div><div style="position:absolute;left:1884.54px;top:283px;width:1.38px;height:2px;background:#232629;"></div><div style="position:absolute;left:1885.92px;top:283px;width:0.46px;height:2px;background:#ca60ca;"></div><div style="position:absolute;left:1886.84px;top:283px;width:2.76px;height:2px;background:#0095ff;"></div><div style="position:absolute;left:1890.06px;top:283px;width:0.46px;height:2px;background:#ca60ca;"></div><div style="position:absolute;left:1890.52px;top:283px;width:2.3px;height:2px;background:#232629;"></div><div style="position:absolute;left:1892.82px;top:283px;width:0.46px;height:2px;background:#ca60ca;"></div><div style="position:absolute;left:1862.0px;top:285px;width:0.46px;height:2px;background:#ca60ca;"></div><div style="position:absolute;left:1863.84px;top:287px;width:3.68px;height:2px;background:#0095ff;"></div><div style="position:absolute;left:1867.52px;top:287px;width:0.46px;height:2px;background:#ca60ca;"></div><div style="position:absolute;left:1867.98px;top:287px;width:1.38px;height:2px;background:#232629;"></div><div style="position:absolute;left:1869.36px;top:287px;width:0.92px;height:2px;background:#ca60ca;"></div><div style="position:absolute;left:1863.84px;top:289px;width:0.92px;height:2px;background:#232629;"></div><div style="position:absolute;left:1865.22px;top:289px;width:0.46px;height:2px;background:#ca60ca;"></div><div style="position:absolute;left:1865.68px;top:289px;width:2.3px;height:2px;background:#232629;"></div><div style="position:absolute;left:1867.98px;top:289px;width:0.92px;height:2px;background:#ca60ca;"></div><div style="position:absolute;left:1868.9px;top:289px;width:1.84px;height:2px;background:#232629;"></div><div style="position:absolute;left:1870.74px;top:289px;width:0.92px;height:2px;background:#ca60ca;"></div><div style="position:absolute;left:1872.12px;top:289px;width:0.92px;height:2px;background:#ca60ca;"></div><div style="position:absolute;left:1873.5px;top:289px;width:14.72px;height:2px;background:#0095ff;"></div><div style="position:absolute;left:1888.22px;top:289px;width:0.46px;height:2px;background:#ca60ca;"></div><div style="position:absolute;left:1889.14px;top:289px;width:0.46px;height:2px;background:#ca60ca;"></div><div style="position:absolute;left:1865.68px;top:291px;width:8.28px;height:2px;background:#232629;"></div><div style="position:absolute;left:1873.96px;top:291px;width:1.38px;height:2px;background:#ca60ca;"></div><div style="position:absolute;left:1863.84px;top:293px;width:0.46px;height:2px;background:#ca60ca;"></div><div style="position:absolute;left:1863.84px;top:295px;width:2.76px;height:2px;background:#232629;"></div><div style="position:absolute;left:1867.06px;top:295px;width:2.3px;height:2px;background:#232629;"></div><div style="position:absolute;left:1869.36px;top:295px;width:0.46px;height:2px;background:#ca60ca;"></div><div style="position:absolute;left:1862.0px;top:297px;width:0.46px;height:2px;background:#ca60ca;"></div><div style="position:absolute;left:1862.0px;top:301px;width:9.66px;height:2px;background:#232629;"></div><div style="position:absolute;left:1871.66px;top:301px;width:0.92px;height:2px;background:#ca60ca;"></div><div style="position:absolute;left:1872.58px;top:301px;width:9.66px;height:2px;background:#232629;"></div><div style="position:absolute;left:1882.24px;top:301px;width:0.92px;height:2px;background:#ca60ca;"></div><div style="position:absolute;left:1864px;top:305px;width:11px;height:2px;background:#8a8a8a;"></div><div style="position:absolute;left:1864px;top:307px;width:2px;height:2px;background:#6cb8f0;"></div><div style="position:absolute;left:1866px;top:307px;width:1px;height:2px;background:#e08fe0;"></div><div style="position:absolute;left:1867px;top:307px;width:11px;height:2px;background:#8a8a8a;"></div><div style="position:absolute;left:1862px;top:309px;width:1px;height:2px;background:#e08fe0;"></div><div style="position:absolute;left:1862px;top:313px;width:2px;height:2px;background:#5b8fd0;"></div><div style="position:absolute;left:1864px;top:313px;width:20px;height:2px;background:#8a8a8a;"></div><div style="position:absolute;left:1862px;top:315px;width:1px;height:2px;background:#e08fe0;"></div><div style="position:absolute;left:1864px;top:316px;width:11px;height:2px;background:#8a8a8a;"></div><div style="position:absolute;left:1864px;top:318px;width:5px;height:2px;background:#8a8a8a;"></div><div style="position:absolute;left:1869px;top:318px;width:12px;height:2px;background:#5b8fd0;"></div><div style="position:absolute;left:1881px;top:318px;width:3px;height:2px;background:#8a8a8a;"></div><div style="position:absolute;left:1886px;top:318px;width:13px;height:2px;background:#5b8fd0;"></div><div style="position:absolute;left:1899px;top:318px;width:2px;height:2px;background:#e08fe0;"></div><div style="position:absolute;left:1901px;top:318px;width:2px;height:2px;background:#8a8a8a;"></div><div style="position:absolute;left:1866px;top:320px;width:3px;height:2px;background:#8a8a8a;"></div><div style="position:absolute;left:1869px;top:320px;width:1px;height:2px;background:#e08fe0;"></div><div style="position:absolute;left:1868px;top:322px;width:10px;height:2px;background:#8a8a8a;"></div><div style="position:absolute;left:1868px;top:324px;width:2px;height:2px;background:#8a8a8a;"></div><div style="position:absolute;left:1870px;top:324px;width:1px;height:2px;background:#e08fe0;"></div><div style="position:absolute;left:1871px;top:324px;width:12px;height:2px;background:#5b8fd0;"></div><div style="position:absolute;left:1883px;top:324px;width:2px;height:2px;background:#8a8a8a;"></div><div style="position:absolute;left:1885px;top:324px;width:1px;height:2px;background:#e08fe0;"></div><div style="position:absolute;left:1870px;top:326px;width:3px;height:2px;background:#8a8a8a;"></div><div style="position:absolute;left:1868px;top:328px;width:1px;height:2px;background:#8a8a8a;"></div><div style="position:absolute;left:1866px;top:330px;width:1px;height:2px;background:#8a8a8a;"></div><div style="position:absolute;left:1866px;top:332px;width:15px;height:2px;background:#8a8a8a;"></div><div style="position:absolute;left:1881px;top:332px;width:9px;height:2px;background:#5b8fd0;"></div><div style="position:absolute;left:1864px;top:334px;width:1px;height:2px;background:#8a8a8a;"></div><div style="position:absolute;left:1862px;top:336px;width:1px;height:2px;background:#e08fe0;"></div><div style="position:absolute;left:1862px;top:340px;width:2px;height:2px;background:#5b8fd0;"></div><div style="position:absolute;left:1864px;top:340px;width:21px;height:2px;background:#8a8a8a;"></div><div style="position:absolute;left:1885px;top:340px;width:1px;height:2px;background:#e08fe0;"></div><div style="position:absolute;left:1862px;top:342px;width:1px;height:2px;background:#e08fe0;"></div><div style="position:absolute;left:1864px;top:344px;width:36px;height:2px;background:#b0b0b0;"></div><div style="position:absolute;left:1864px;top:346px;width:3px;height:2px;background:#5b8fd0;"></div><div style="position:absolute;left:1867px;top:346px;width:14px;height:2px;background:#8a8a8a;"></div><div style="position:absolute;left:1881px;top:346px;width:9px;height:2px;background:#6cb8f0;"></div><div style="position:absolute;left:1890px;top:346px;width:6px;height:2px;background:#8a8a8a;"></div><div style="position:absolute;left:1896px;top:346px;width:1px;height:2px;background:#e08fe0;"></div><div style="position:absolute;left:1897px;top:346px;width:3px;height:2px;background:#8a8a8a;"></div><div style="position:absolute;left:1864px;top:348px;width:33px;height:2px;background:#8a8a8a;"></div><div style="position:absolute;left:1897px;top:348px;width:1px;height:2px;background:#e08fe0;"></div><div style="position:absolute;left:1898px;top:348px;width:6px;height:2px;background:#8a8a8a;"></div><div style="position:absolute;left:1904px;top:348px;width:1px;height:2px;background:#e08fe0;"></div><div style="position:absolute;left:1905px;top:348px;width:7px;height:2px;background:#8a8a8a;"></div><div style="position:absolute;left:1864px;top:350px;width:48px;height:2px;background:#c0c0c0;"></div><div style="position:absolute;left:1864px;top:352px;width:3px;height:2px;background:#5b8fd0;"></div><div style="position:absolute;left:1867px;top:352px;width:31px;height:2px;background:#8a8a8a;"></div><div style="position:absolute;left:1898px;top:352px;width:1px;height:2px;background:#e08fe0;"></div><div style="position:absolute;left:1899px;top:352px;width:6px;height:2px;background:#8a8a8a;"></div><div style="position:absolute;left:1905px;top:352px;width:1px;height:2px;background:#e08fe0;"></div><div style="position:absolute;left:1906px;top:352px;width:6px;height:2px;background:#8a8a8a;"></div><div style="position:absolute;left:1864px;top:355px;width:48px;height:2px;background:#c0c0c0;"></div><div style="position:absolute;left:1864px;top:357px;width:4px;height:2px;background:#5b8fd0;"></div><div style="position:absolute;left:1868px;top:357px;width:7px;height:2px;background:#8a8a8a;"></div><div style="position:absolute;left:1876px;top:357px;width:13px;height:2px;background:#8a8a8a;"></div><div style="position:absolute;left:1889px;top:357px;width:1px;height:2px;background:#e08fe0;"></div><div style="position:absolute;left:1890px;top:357px;width:12px;height:2px;background:#8a8a8a;"></div><div style="position:absolute;left:1902px;top:357px;width:1px;height:2px;background:#e08fe0;"></div><div style="position:absolute;left:1864px;top:359px;width:2px;height:2px;background:#5b8fd0;"></div><div style="position:absolute;left:1866px;top:359px;width:2px;height:2px;background:#8a8a8a;"></div><div style="position:absolute;left:1864px;top:361px;width:2px;height:2px;background:#8a8a8a;"></div><div style="position:absolute;left:1866px;top:361px;width:3px;height:2px;background:#a890d0;"></div><div style="position:absolute;left:1869px;top:361px;width:8px;height:2px;background:#8a8a8a;"></div><div style="position:absolute;left:1877px;top:361px;width:1px;height:2px;background:#e0b040;"></div><div style="position:absolute;left:1866px;top:363px;width:16px;height:2px;background:#8a8a8a;"></div><div style="position:absolute;left:1882px;top:363px;width:1px;height:2px;background:#e08fe0;"></div><div style="position:absolute;left:1883px;top:363px;width:14px;height:2px;background:#8a8a8a;"></div><div style="position:absolute;left:1897px;top:363px;width:1px;height:2px;background:#e08fe0;"></div><div style="position:absolute;left:1898px;top:363px;width:1px;height:2px;background:#8a8a8a;"></div><div style="position:absolute;left:1864px;top:365px;width:3px;height:2px;background:#8a8a8a;"></div><div style="position:absolute;left:1866px;top:367px;width:10px;height:2px;background:#8a8a8a;"></div><div style="position:absolute;left:1878px;top:367px;width:13px;height:2px;background:#8a8a8a;"></div><div style="position:absolute;left:1891px;top:367px;width:2px;height:2px;background:#e0b040;"></div><div style="position:absolute;left:1893px;top:367px;width:13px;height:2px;background:#8a8a8a;"></div><div style="position:absolute;left:1866px;top:369px;width:4px;height:2px;background:#8a8a8a;"></div><div style="position:absolute;left:1870px;top:369px;width:2px;height:2px;background:#e0b040;"></div><div style="position:absolute;left:1872px;top:369px;width:30px;height:2px;background:#c0c0c0;"></div><div style="position:absolute;left:1864px;top:371px;width:1px;height:2px;background:#8a8a8a;"></div><div style="position:absolute;left:1864px;top:375px;width:9px;height:2px;background:#5b8fd0;"></div><div style="position:absolute;left:1873px;top:375px;width:8px;height:2px;background:#6cb8f0;"></div><div style="position:absolute;left:1881px;top:375px;width:3px;height:2px;background:#8a8a8a;"></div><div style="position:absolute;left:1882px;top:377px;width:30px;height:2px;background:#c0c0c0;"></div><div style="position:absolute;left:1882px;top:379px;width:30px;height:2px;background:#c0c0c0;"></div><div style="position:absolute;left:1882px;top:381px;width:1px;height:2px;background:#e0b040;"></div><div style="position:absolute;left:1883px;top:381px;width:18px;height:2px;background:#8a8a8a;"></div><div style="position:absolute;left:1901px;top:381px;width:1px;height:2px;background:#e0b040;"></div><div style="position:absolute;left:1902px;top:381px;width:10px;height:2px;background:#8a8a8a;"></div><div style="position:absolute;left:1882px;top:383px;width:29px;height:2px;background:#8a8a8a;"></div><div style="position:absolute;left:1882px;top:385px;width:29px;height:2px;background:#8a8a8a;"></div><div style="position:absolute;left:1862px;top:388px;width:1px;height:2px;background:#e08fe0;"></div><div style="position:absolute;left:1862px;top:392px;width:22px;height:2px;background:#8a8a8a;"></div><div style="position:absolute;left:1884px;top:392px;width:5px;height:2px;background:#5b8fd0;"></div><div style="position:absolute;left:1889px;top:392px;width:4px;height:2px;background:#8a8a8a;"></div><div style="position:absolute;left:1856px;top:396px;width:57px;height:1px;background:#e0e0e0;"></div><div style="position:absolute;left:2px;top:1079px;width:1912px;height:39px;background:#eff0f1;"></div><div style="position:absolute;left:2px;top:1079px;width:1912px;height:1px;background:#c3c4c5;"></div><div style="position:absolute;left:2px;top:1081px;width:99px;height:37px;border-radius:7px 7px 7px 9px;background:#937b69"></div><svg style="position:absolute;left:10px;top:1090px" width="20" height="20" viewBox="0 0 20 20"><path d="M1.6 1.6 H18.6 V12 H1.6 Z" fill="none" stroke="#3b2a1e" stroke-width="1.4"/><path d="M1 12 H5 L2 16.5 Z" fill="#3b2a1e"/></svg><svg style="position:absolute;left:109px;top:1089px" width="20" height="20" viewBox="0 0 20 20"><path d="M1.6 1.6 H18.6 V12 H1.6 Z" fill="none" stroke="#232629" stroke-width="1.4"/><path d="M1 12 H5 L2 16.5 Z" fill="#232629"/><rect x="9" y="3.6" width="2" height="4.6" fill="#232629"/><rect x="9" y="9.2" width="2" height="1.8" fill="#232629"/></svg><svg style="position:absolute;left:243px;top:1089px" width="20" height="20" viewBox="0 0 20 20"><circle cx="8" cy="8" r="6.3" fill="none" stroke="#232629" stroke-width="1.5"/><path d="M12.5 12.5 L18 18" stroke="#232629" stroke-width="1.6"/></svg><svg style="position:absolute;left:337px;top:1089px" width="20" height="20" viewBox="0 0 20 20"><rect x="1.5" y="1.5" width="17" height="17" fill="none" stroke="#232629" stroke-width="1.6"/><rect x="1" y="1" width="18" height="4" fill="#232629"/><rect x="4" y="7" width="2.6" height="2.6" fill="#232629"/><path d="M8 8.5 H15.5 M4.5 12 H15.5 M4.5 15 H15.5" stroke="#232629" stroke-width="1.3"/></svg><svg style="position:absolute;left:433px;top:1089px" width="20" height="20" viewBox="0 0 20 20"><rect x="1.2" y="1.2" width="17.6" height="17.6" fill="none" stroke="#6b6e71" stroke-width="1.4"/><path d="M4 5 L8 8.5 L4 12 M9 14.5 H15" fill="none" stroke="#232629" stroke-width="1.3"/></svg><svg style="position:absolute;left:1418px;top:1084px" width="30" height="30" viewBox="0 0 30 30"><circle cx="9.9" cy="8.8" r="2.3" fill="none" stroke="#232629" stroke-width="1.2"/><circle cx="9.9" cy="20.9" r="2.3" fill="none" stroke="#232629" stroke-width="1.2"/><circle cx="20.9" cy="8.8" r="2.3" fill="none" stroke="#3daee9" stroke-width="1.2"/><path d="M9.9 11.1 V18.6 M9.9 16.5 Q10 14.6 12 14.6 H18.5 Q20.9 14.6 20.9 11.1" fill="none" stroke="#232629" stroke-width="1.2"/></svg><div class="t" style="left:41.19px;top:14px;font-size:18px;color:#1a1a1a;font-weight:400;transform:scaleX(1.0142);">backgroundcolorhelper.cpp</div><div class="t" style="left:272.00px;top:14px;font-size:18px;color:#1a1a1a;font-weight:400;transform:scaleX(0.9456);">- Kate</div><div class="t" style="left:12.02px;top:55px;font-size:18px;color:#232629;font-weight:400;transform:scaleX(0.8824);">File</div><div class="t" style="left:57.53px;top:55px;font-size:18px;color:#232629;font-weight:400;transform:scaleX(0.9728);">Edit</div><div class="t" style="left:108.10px;top:55px;font-size:18px;color:#232629;font-weight:400;transform:scaleX(0.9639);">Selection</div><div class="t" style="left:199.40px;top:55px;font-size:18px;color:#232629;font-weight:400;transform:scaleX(0.9196);">View</div><div class="t" style="left:256.40px;top:55px;font-size:18px;color:#232629;font-weight:400;transform:scaleX(0.9125);">Go</div><div class="t" style="left:298.65px;top:55px;font-size:18px;color:#232629;font-weight:400;transform:scaleX(0.9512);">Projects</div><div class="t" style="left:380.08px;top:55px;font-size:18px;color:#232629;font-weight:400;transform:scaleX(0.9162);">LSP Client</div><div class="t" style="left:478.00px;top:55px;font-size:18px;color:#232629;font-weight:400;transform:scaleX(0.9310);">Sessions</div><div class="t" style="left:566.00px;top:55px;font-size:18px;color:#232629;font-weight:400;transform:scaleX(0.9757);">Tools</div><div class="t" style="left:627.00px;top:55px;font-size:18px;color:#232629;font-weight:400;transform:scaleX(0.9840);">Settings</div><div class="t" style="left:709.97px;top:55px;font-size:18px;color:#232629;font-weight:400;transform:scaleX(1.0275);">Help</div><div class="t" style="left:45.27px;top:97px;font-size:18px;color:#232629;font-weight:400;transform:scaleX(0.9331);">New</div><div class="t" style="left:128.50px;top:97px;font-size:18px;color:#232629;font-weight:400;transform:scaleX(0.9615);">Open...</div><div class="t" style="left:261.50px;top:97px;font-size:18px;color:#232629;font-weight:400;transform:scaleX(0.8801);">Save</div><div class="t" style="left:346.50px;top:97px;font-size:18px;color:#232629;font-weight:400;transform:scaleX(0.9095);">Save As...</div><div class="t" style="left:476.59px;top:97px;font-size:18px;color:#a5a7a9;font-weight:400;transform:scaleX(1.0090);">Undo</div><div class="t" style="left:568.56px;top:97px;font-size:18px;color:#a5a7a9;font-weight:400;transform:scaleX(0.9424);">Redo</div><div class="t" style="left:82.70px;top:140px;font-size:18px;color:#232629;font-weight:400;transform:scaleX(1.0466);">dolphin</div><div class="t" style="left:89.76px;top:178px;font-size:18px;color:#232629;font-weight:400;transform:scaleX(0.8384);">LICENSES</div><div class="t" style="left:89.52px;top:210px;font-size:18px;color:#232629;font-weight:400;transform:scaleX(1.0836);">po</div><div class="t" style="left:90.60px;top:242px;font-size:18px;color:#232629;font-weight:400;transform:scaleX(0.9086);">src</div><div class="t" style="left:102.60px;top:274px;font-size:18px;color:#232629;font-weight:400;transform:scaleX(0.9979);">filterbar</div><div class="t" style="left:101.64px;top:306px;font-size:18px;color:#232629;font-weight:400;transform:scaleX(0.9629);">icons</div><div class="t" style="left:101.62px;top:338px;font-size:18px;color:#232629;font-weight:400;transform:scaleX(0.9826);">kitemviews</div><div class="t" style="left:101.65px;top:370px;font-size:18px;color:#232629;font-weight:400;transform:scaleX(0.9512);">panels</div><div class="t" style="left:102.60px;top:402px;font-size:18px;color:#232629;font-weight:400;transform:scaleX(0.9205);">search</div><div class="t" style="left:102.60px;top:434px;font-size:18px;color:#232629;font-weight:400;transform:scaleX(0.9909);">selectionmode</div><div class="t" style="left:116.25px;top:466px;font-size:18px;color:#232629;font-weight:400;transform:scaleX(0.9916);">actiontexthelper.cpp</div><div class="t" style="left:116.25px;top:498px;font-size:18px;color:#232629;font-weight:400;transform:scaleX(0.9940);">actiontexthelper.h</div><div class="t" style="left:116.25px;top:530px;font-size:18px;color:#232629;font-weight:400;transform:scaleX(1.0115);">actionwithwidget.cpp</div><div class="t" style="left:116.25px;top:562px;font-size:18px;color:#232629;font-weight:400;transform:scaleX(1.0132);">actionwithwidget.h</div><div class="t" style="left:115.25px;top:594px;font-size:18px;color:#ffffff;font-weight:400;transform:scaleX(0.9982);">backgroundcolorhelper.c...</div><div class="t" style="left:115.24px;top:626px;font-size:18px;color:#232629;font-weight:400;transform:scaleX(1.0147);">backgroundcolorhelper.h</div><div class="t" style="left:115.19px;top:658px;font-size:18px;color:#232629;font-weight:400;transform:scaleX(1.0614);">bottombar.cpp</div><div class="t" style="left:115.18px;top:690px;font-size:18px;color:#232629;font-weight:400;transform:scaleX(1.0720);">bottombar.h</div><div class="t" style="left:115.22px;top:722px;font-size:18px;color:#232629;font-weight:400;transform:scaleX(1.0313);">bottombarcontentscont...</div><div class="t" style="left:115.22px;top:754px;font-size:18px;color:#232629;font-weight:400;transform:scaleX(1.0313);">bottombarcontentscont...</div><div class="t" style="left:116.25px;top:786px;font-size:18px;color:#232629;font-weight:400;transform:scaleX(0.9776);">singleclickselectionproxy...</div><div class="t" style="left:116.25px;top:818px;font-size:18px;color:#232629;font-weight:400;transform:scaleX(1.0320);">topbar.cpp</div><div class="t" style="left:116.25px;top:850px;font-size:18px;color:#232629;font-weight:400;transform:scaleX(1.0500);">topbar.h</div><div class="t" style="left:102.60px;top:882px;font-size:18px;color:#232629;font-weight:400;transform:scaleX(0.9833);">settings</div><div class="t" style="left:102.60px;top:914px;font-size:18px;color:#232629;font-weight:400;transform:scaleX(0.9737);">statusbar</div><div class="t" style="left:102.60px;top:946px;font-size:18px;color:#232629;font-weight:400;transform:scaleX(0.9444);">tests</div><div class="t" style="left:102.60px;top:978px;font-size:18px;color:#232629;font-weight:400;transform:scaleX(0.9665);">trash</div><div class="t" style="left:101.63px;top:1010px;font-size:18px;color:#232629;font-weight:400;transform:scaleX(0.9670);">userfeedback</div><div class="t" style="left:54.76px;top:1052px;font-size:18px;color:#8a8d90;font-weight:400;transform:scaleX(0.9364);">Filter...</div><div class="t" style="left:463.59px;top:139px;font-size:18px;color:#232629;font-weight:400;transform:scaleX(1.0124);">backgroundcolorhelper.cpp</div><div class="t" style="left:362.47px;top:169px;font-size:18px;color:#232629;font-weight:400;transform:scaleX(0.9306);">...</div><div class="t" style="left:390.50px;top:169px;font-size:18px;color:#232629;font-weight:400;transform:scaleX(0.8961);">src</div><div class="t" style="left:430.80px;top:169px;font-size:18px;color:#232629;font-weight:400;transform:scaleX(0.9892);">selectionmode</div><div class="t" style="left:585.79px;top:169px;font-size:18px;color:#232629;font-weight:400;transform:scaleX(1.0096);">backgroundcolorhelper.cpp</div><div class="t" style="left:38.30px;top:1091px;font-size:18px;color:#2b1a10;font-weight:400;transform:scaleX(1.0345);">Output</div><div class="t" style="left:136.92px;top:1091px;font-size:18px;color:#232629;font-weight:400;transform:scaleX(0.9800);">Diagnostics</div><div class="t" style="left:271.00px;top:1091px;font-size:18px;color:#232629;font-weight:400;transform:scaleX(0.9157);">Search</div><div class="t" style="left:364.23px;top:1091px;font-size:18px;color:#232629;font-weight:400;transform:scaleX(0.9724);">Project</div><div class="t" style="left:461.70px;top:1091px;font-size:18px;color:#232629;font-weight:400;transform:scaleX(0.9594);">Terminal</div><div class="t" style="left:1449.62px;top:1091px;font-size:18px;color:#232629;font-weight:400;transform:scaleX(0.9830);">master</div><div class="t" style="left:1523.00px;top:1091px;font-size:18px;color:#232629;font-weight:400;transform:scaleX(0.8954);">1:1</div><div class="t" style="left:1562.85px;top:1091px;font-size:18px;color:#232629;font-weight:400;transform:scaleX(0.8503);">INSERT</div><div class="t" style="left:1635.70px;top:1091px;font-size:18px;color:#232629;font-weight:400;transform:scaleX(0.8650);">de_DE</div><div class="t" style="left:1700.30px;top:1091px;font-size:18px;color:#232629;font-weight:400;transform:scaleX(0.9543);">Soft Tabs: 4</div><div class="t" style="left:1807.07px;top:1091px;font-size:18px;color:#232629;font-weight:400;transform:scaleX(0.9323);">UTF-8</div><div class="t" style="left:1871.30px;top:1091px;font-size:18px;color:#232629;font-weight:400;transform:scaleX(0.9818);">C++</div>
</div>
</body></html>
